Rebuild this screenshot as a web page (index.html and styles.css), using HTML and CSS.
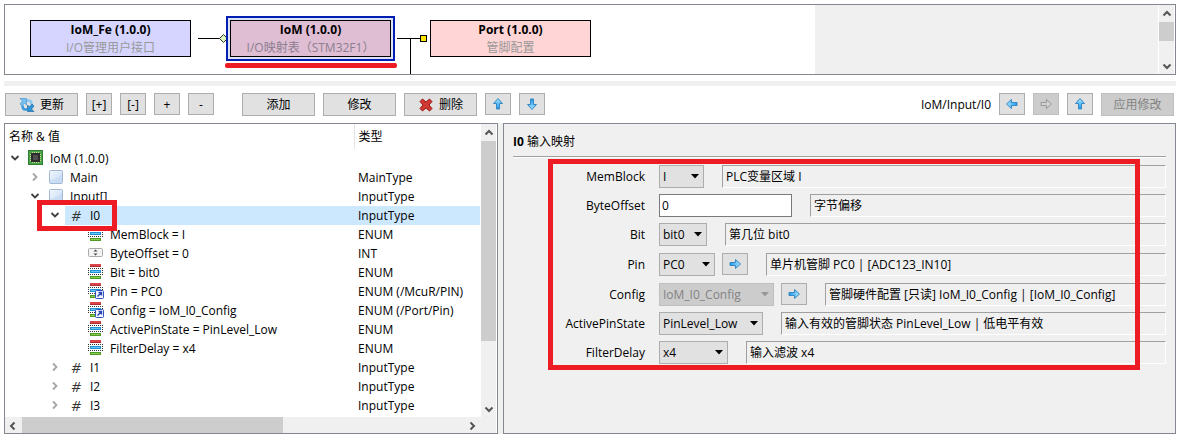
FILE: index.html
```
<!DOCTYPE html>
<html lang="zh">
<head>
    <meta charset="UTF-8">
    <meta name="viewport" content="width=device-width, initial-scale=1.0">
    <title>IoM</title>
    <link rel="stylesheet" href="styles.css">
</head>
<body>

    <!-- shared icons -->
    <svg class="sprite" aria-hidden="true">
        <defs>
            <linearGradient id="blue" x1="0" y1="0" x2="0" y2="1">
                <stop offset="0" stop-color="#a5e4ff"/>
                <stop offset="1" stop-color="#1a9bf5"/>
            </linearGradient>
            <linearGradient id="pale" x1="0" y1="0" x2="1" y2="1">
                <stop offset="0" stop-color="#f0f6fd"/>
                <stop offset="1" stop-color="#c9dcf3"/>
            </linearGradient>
        </defs>
        <symbol id="arrow" viewBox="0 0 14 14">
            <path d="M7 1.500L11.500 6.500H8.500v5.500H5.500V6.500H2.500z" fill="url(#blue)" stroke="#3a86bf" stroke-linejoin="round"/>
        </symbol>
        <symbol id="arrow-off" viewBox="0 0 14 14">
            <path d="M7 1.500L11.500 6.500H8.500v5.500H5.500V6.500H2.500z" fill="#d2d2d2" stroke="#999" stroke-linejoin="round"/>
        </symbol>
        <symbol id="open" viewBox="0 0 10 10">
            <path d="M1.500 3L5 6.500 8.500 3" fill="none" stroke="#404040" stroke-width="1.800"/>
        </symbol>
        <symbol id="closed" viewBox="0 0 10 10">
            <path d="M3 1.500L6.500 5 3 8.500" fill="none" stroke="#a6a6a6" stroke-width="1.800"/>
        </symbol>
        <symbol id="chip" viewBox="0 0 16 16">
            <rect x=".5" y=".5" width="14" height="14" fill="#4aa548" stroke="#2f7d33"/>
            <path d="M4.500 2v11M6.500 2v11M8.500 2v11M10.500 2v11M2 4.500h11M2 6.500h11M2 8.500h11M2 10.500h11" stroke="#d3d59a"/>
            <rect x="3" y="3" width="9" height="9" fill="#2c2c2c"/>
            <rect x="5" y="5" width="5" height="5" fill="#505050"/>
        </symbol>
        <symbol id="box" viewBox="0 0 16 16">
            <rect x="1.500" y="1.500" width="13" height="13" rx="1" fill="url(#pale)" stroke="#a3b8d2"/>
            <path d="M2 11Q7 11 14 5v9H2z" fill="#c3d8f2" opacity=".7"/>
        </symbol>
        <symbol id="enum" viewBox="0 0 16 16">
            <rect x="2" y="0" width="11" height="3" fill="#d9444a"/>
            <path d="M2 2.500h11" stroke="#b02c33"/>
            <path d="M0 4.500h15M0 10.500h15" stroke="#333" stroke-dasharray="1 1"/>
            <path d="M.5 6v4M14.500 6v4" stroke="#333" stroke-dasharray="1 1"/>
            <rect x="2" y="6" width="11" height="3" fill="#1e90d6"/>
            <path d="M3 7.500h9" stroke="#6cc4f2"/>
            <rect x="2" y="12" width="11" height="3" fill="#4f9a27"/>
            <path d="M3 13.500h9" stroke="#86cc50"/>
        </symbol>
        <symbol id="badge" viewBox="0 0 16 16">
            <rect x="7.500" y="7.500" width="8" height="8" rx="1" fill="#f2f5ff" stroke="#3353c0"/>
            <path d="M9.500 13.500l4-4M10.500 9.500h3v3" fill="none" stroke="#2745b5" stroke-width="1.400"/>
        </symbol>
        <symbol id="spin" viewBox="0 0 16 16">
            <rect x=".5" y="3.500" width="14" height="8" rx="1" fill="#f3f3f3" stroke="#aaa"/>
            <path d="M7.500 4.500l2 2h-4zM7.500 10.500l2-2h-4z" fill="#444"/>
        </symbol>
        <symbol id="caret" viewBox="0 0 8 5">
            <path d="M0 0h8L4 4.500z"/>
        </symbol>
        <symbol id="scroll" viewBox="0 0 10 10">
            <path d="M1.500 6.500L5 3l3.500 3.500" fill="none" stroke="#555" stroke-width="2"/>
        </symbol>
    </svg>

    <main class="app">
        <section class="diagram">
            <div class="canvas">
                <svg class="wires" width="460" height="69" aria-hidden="true">
                    <path d="M193 33.500h22M392 33.500h24M405.500 34v35" stroke="#000"/>
                    <path d="M218.500 29.500l4 4-4 4-4-4z" fill="#d9f5b8" stroke="#333"/>
                    <rect x="415.500" y="30.500" width="6" height="6" fill="#ffe600" stroke="#000"/>
                </svg>
                <div class="node node-fe"><b>IoM_Fe (1.0.0)</b><span>I/O管理用户接口</span></div>
                <div class="node node-iom"><b>IoM (1.0.0)</b><span>I/O映射表（STM32F1）</span></div>
                <div class="node node-port"><b>Port (1.0.0)</b><span>管脚配置</span></div>
                <div class="underline"></div>
            </div>
            <div class="vbar">
                <svg class="tick"><use href="#scroll"/></svg>
                <div class="thumb"></div>
                <svg class="tick down"><use href="#scroll"/></svg>
            </div>
        </section>

        <div class="sash"></div>

        <div class="toolbar">
            <button class="btn wide">
                <svg class="icon" viewBox="0 0 16 16">
                    <path d="M7 3.500h2.500q3 0 3 4" fill="none" stroke="#8cc8ee" stroke-width="2.500"/>
                    <path d="M8 12.500H6.500q-3 0-3-4" fill="none" stroke="#3b9add" stroke-width="2.500"/>
                    <path d="M1 1.500h6.500V8L5.500 6 3 9 1 7l2.500-3z" fill="#74c2f0" stroke="#4a97cc" stroke-width=".7"/>
                    <path d="M15 14.500H8.500V8l2 2L13 7l2 2-2.500 3z" fill="#2f93d8" stroke="#1c6cab" stroke-width=".7"/>
                </svg>更新</button>
            <button class="btn small">[+]</button>
            <button class="btn small">[-]</button>
            <button class="btn small">+</button>
            <button class="btn small">-</button>
            <button class="btn wide group">添加</button>
            <button class="btn wide">修改</button>
            <button class="btn wide">
                <svg class="icon" viewBox="0 0 16 16">
                    <path d="M4.500 2L8 5l3.500-3L14 4.500 11 8l3 3.500-2.500 2.500L8 11l-3.500 3L2 11.500 5 8 2 4.500z" fill="#d03a35" stroke="#9a1713"/>
                </svg>删除</button>
            <button class="btn small" aria-label="Up"><svg class="arrow"><use href="#arrow"/></svg></button>
            <button class="btn small" aria-label="Down"><svg class="arrow down"><use href="#arrow"/></svg></button>
            <span class="path">IoM/Input/I0</span>
            <button class="btn small" aria-label="Back"><svg class="arrow left"><use href="#arrow"/></svg></button>
            <button class="btn small" aria-label="Forward" disabled><svg class="arrow right"><use href="#arrow-off"/></svg></button>
            <button class="btn small" aria-label="Parent"><svg class="arrow"><use href="#arrow"/></svg></button>
            <button class="btn wide" disabled>应用修改</button>
        </div>

        <div class="panes">
            <section class="tree">
                <table>
                    <thead>
                        <tr><th>名称 &amp; 值</th><th>类型</th></tr>
                    </thead>
                    <tbody>
                        <tr><td><div class="cell"><svg class="twist"><use href="#open"/></svg><svg class="icon"><use href="#chip"/></svg>IoM (1.0.0)</div></td><td></td></tr>
                        <tr><td><div class="cell level1"><svg class="twist"><use href="#closed"/></svg><svg class="icon"><use href="#box"/></svg>Main</div></td><td>MainType</td></tr>
                        <tr><td><div class="cell level1"><svg class="twist"><use href="#open"/></svg><svg class="icon"><use href="#box"/></svg>Input[]</div></td><td>InputType</td></tr>
                        <tr class="selected"><td><div class="cell level2"><svg class="twist"><use href="#open"/></svg><i class="hash">#</i>I0</div></td><td>InputType</td></tr>
                        <tr><td><div class="cell level3"><svg class="icon"><use href="#enum"/></svg>MemBlock = I</div></td><td>ENUM</td></tr>
                        <tr><td><div class="cell level3"><svg class="icon"><use href="#spin"/></svg>ByteOffset = 0</div></td><td>INT</td></tr>
                        <tr><td><div class="cell level3"><svg class="icon"><use href="#enum"/></svg>Bit = bit0</div></td><td>ENUM</td></tr>
                        <tr><td><div class="cell level3"><svg class="icon"><use href="#enum"/><use href="#badge"/></svg>Pin = PC0</div></td><td>ENUM (/McuR/PIN)</td></tr>
                        <tr><td><div class="cell level3"><svg class="icon"><use href="#enum"/><use href="#badge"/></svg>Config = IoM_I0_Config</div></td><td>ENUM (/Port/Pin)</td></tr>
                        <tr><td><div class="cell level3"><svg class="icon"><use href="#enum"/></svg>ActivePinState = PinLevel_Low</div></td><td>ENUM</td></tr>
                        <tr><td><div class="cell level3"><svg class="icon"><use href="#enum"/></svg>FilterDelay = x4</div></td><td>ENUM</td></tr>
                        <tr><td><div class="cell level2"><svg class="twist"><use href="#closed"/></svg><i class="hash">#</i>I1</div></td><td>InputType</td></tr>
                        <tr><td><div class="cell level2"><svg class="twist"><use href="#closed"/></svg><i class="hash">#</i>I2</div></td><td>InputType</td></tr>
                        <tr><td><div class="cell level2"><svg class="twist"><use href="#closed"/></svg><i class="hash">#</i>I3</div></td><td>InputType</td></tr>
                    </tbody>
                </table>
                <div class="vbar">
                    <svg class="tick"><use href="#scroll"/></svg>
                    <div class="thumb tall"></div>
                    <svg class="tick down"><use href="#scroll"/></svg>
                </div>
                <div class="hbar">
                    <svg class="tick left"><use href="#scroll"/></svg>
                    <div class="thumb"></div>
                    <svg class="tick right"><use href="#scroll"/></svg>
                </div>
                <div class="corner"></div>
                <div class="mark mark-row"></div>
            </section>

            <section class="props">
                <h1><b>I0</b> 输入映射</h1>
                <form class="form">
                    <div class="field">
                        <label for="mem">MemBlock</label>
                        <span class="combo w45"><select id="mem"><option>I</option></select><svg><use href="#caret"/></svg></span>
                        <output class="hint">PLC变量区域 I</output>
                    </div>
                    <div class="field">
                        <label for="offset">ByteOffset</label>
                        <input id="offset" type="text" value="0">
                        <output class="hint">字节偏移</output>
                    </div>
                    <div class="field">
                        <label for="bit">Bit</label>
                        <span class="combo w48"><select id="bit"><option>bit0</option></select><svg><use href="#caret"/></svg></span>
                        <output class="hint">第几位 bit0</output>
                    </div>
                    <div class="field tall">
                        <label for="pin">Pin</label>
                        <span class="combo w56"><select id="pin"><option>PC0</option></select><svg><use href="#caret"/></svg></span>
                        <button type="button" class="btn small" aria-label="Go to pin"><svg class="arrow right"><use href="#arrow"/></svg></button>
                        <output class="hint">单片机管脚 PC0 | [ADC123_IN10]</output>
                    </div>
                    <div class="field tall">
                        <label for="config">Config</label>
                        <span class="combo w115"><select id="config" disabled><option>IoM_I0_Config</option></select><svg><use href="#caret"/></svg></span>
                        <button type="button" class="btn small" aria-label="Go to config"><svg class="arrow right"><use href="#arrow"/></svg></button>
                        <output class="hint">管脚硬件配置 [只读] IoM_I0_Config | [IoM_I0_Config]</output>
                    </div>
                    <div class="field">
                        <label for="state">ActivePinState</label>
                        <span class="combo w104"><select id="state"><option>PinLevel_Low</option></select><svg><use href="#caret"/></svg></span>
                        <output class="hint">输入有效的管脚状态 PinLevel_Low | 低电平有效</output>
                    </div>
                    <div class="field">
                        <label for="filter">FilterDelay</label>
                        <span class="combo w69"><select id="filter"><option>x4</option></select><svg><use href="#caret"/></svg></span>
                        <output class="hint">输入滤波 x4</output>
                    </div>
                    <div class="mark mark-form"></div>
                </form>
            </section>
        </div>
    </main>

</body>
</html>
```
FILE: styles.css
```
* {
    box-sizing: border-box;
}
body {
    margin: 0;
    background-color: #fff;
    color: #000;
    font-family: "Open Sans", "Noto Sans CJK SC", sans-serif;
    font-size: 12px;
    line-height: 19px;
}
button, input, select {
    font: inherit;
    color: inherit;
}
svg {
    display: block;
    flex: none;
}
.sprite {
    position: absolute;
    width: 0;
    height: 0;
}
.app {
    display: flex;
    flex-direction: column;
    min-height: 100vh;
    padding: 4px 3px 4px 4px;
}

/* diagram */
.diagram {
    display: flex;
    height: 71px;
    border: 1px solid #828790;
    background-color: #f0f0f0;
}
.canvas {
    position: relative;
    width: 810px;
    overflow: hidden;
    background-color: #fff;
}
.wires {
    position: absolute;
    left: 0;
    top: 0;
}
.node {
    position: absolute;
    top: 15px;
    width: 161px;
    height: 37px;
    border: 1px solid #000;
    text-align: center;
    line-height: 18px;
}
.node b, .node span {
    display: block;
}
.node span {
    color: #999;
}
.node-fe {
    left: 25px;
    background-color: #d5d5ff;
}
.node-iom {
    left: 225px;
    background-color: #dfbdd2;
    box-shadow: 0 0 0 2px #dbe3f7, 0 0 0 4px #001eb4;
}
.node-iom span {
    color: #8b7f91;
}
.node-port {
    left: 425px;
    background-color: #ffd5d5;
}
.underline {
    position: absolute;
    left: 220px;
    top: 58px;
    width: 172px;
    height: 5px;
    border-radius: 2px;
    background-color: #ed1c24;
}

/* scroll bars */
.vbar {
    display: flex;
    flex-direction: column;
    justify-content: space-between;
    width: 15px;
    margin-left: auto;
    background-color: #f0f0f0;
}
.diagram .vbar {
    width: 17px;
    border-left: 1px solid #fff;
    border-right: 1px solid #fff;
}
.hbar {
    display: flex;
    height: 16px;
    background-color: #f0f0f0;
}
.tick {
    width: 10px;
    height: 10px;
    margin: 4px 3px 3px;
}
.vbar .thumb {
    height: 19px;
    margin-bottom: auto;
    background-color: #cdcdcd;
}
.vbar .thumb.tall {
    flex: 0 0 200px;
}
.hbar .thumb {
    width: 261px;
    margin: 0 auto 0 1px;
    background-color: #cdcdcd;
}
.corner {
    margin-right: 1px;
    background-color: #f0f0f0;
}
.down {
    transform: rotate(180deg);
}
.left {
    transform: rotate(-90deg);
}
.right {
    transform: rotate(90deg);
}

.sash {
    height: 5px;
    margin: 6px 0 7px;
    background-color: #f0f0f0;
}

/* toolbar */
.toolbar {
    display: flex;
    align-items: flex-start;
    gap: 8px;
    height: 30px;
    padding: 0 2px 0 1px;
}
.btn {
    display: flex;
    align-items: center;
    justify-content: center;
    gap: 5px;
    height: 22px;
    padding: 0;
    border: 1px solid #adadad;
    background-color: #e1e1e1;
}
.btn:disabled {
    border-color: #bfbfbf;
    background-color: #ccc;
    color: #838383;
}
.wide {
    width: 73px;
    height: 23px;
}
.small {
    width: 26px;
}
.group {
    margin-left: 20px;
}
.path {
    margin-left: auto;
    line-height: 23px;
}
.icon {
    width: 16px;
    height: 16px;
}
.arrow {
    width: 14px;
    height: 14px;
}

/* tree */
.panes {
    display: flex;
    flex: 1;
    gap: 5px;
    background-color: #f0f0f0;
}
.tree {
    position: relative;
    display: grid;
    grid-template-columns: 1fr 17px;
    grid-template-rows: 1fr 16px;
    width: 494px;
    border: 1px solid #828790;
    background-color: #fff;
}
.tree .vbar {
    margin: 0 1px;
}
table {
    align-self: start;
    width: 100%;
    border-collapse: collapse;
    table-layout: fixed;
}
th, td {
    height: 19px;
    padding: 0 0 0 4px;
    font-weight: normal;
    text-align: left;
    white-space: nowrap;
}
th {
    height: 25px;
}
th:first-child {
    width: 349px;
    border-right: 1px solid #e5e5e5;
}
td:first-child {
    padding: 0;
}
.cell {
    display: flex;
    gap: 6px;
    height: 19px;
    padding-left: 5px;
}
.cell .icon {
    margin-top: 1px;
}
.twist {
    width: 10px;
    height: 10px;
    margin: 4px 2px 0 0;
}
.level1 {
    padding-left: 25px;
}
.level2 {
    padding-left: 45px;
}
.level3 {
    padding-left: 83px;
}
.hash {
    width: 16px;
    color: #333;
    font-size: 15px;
    text-align: center;
}
.selected {
    background: linear-gradient(to right, #fff 60px, #cce8ff 60px);
}

/* properties */
.props {
    flex: 1;
    border: 1px solid #828790;
    padding: 8px 9px;
    background-color: #f0f0f0;
}
h1 {
    margin: 0 0 8px;
    padding-bottom: 4px;
    border-bottom: 1px solid #a0a0a0;
    box-shadow: 0 1px #fff;
    font-size: 12px;
    font-weight: normal;
    line-height: 20px;
}
.form {
    position: relative;
    display: flex;
    flex-direction: column;
    gap: 6px;
}
.field {
    display: flex;
    align-items: center;
    height: 23px;
}
.field.tall {
    height: 24px;
}
label {
    width: 132px;
    margin-right: 14px;
    text-align: right;
}
input {
    width: 133px;
    height: 23px;
    padding: 0 2px;
    border: 1px solid #7a7a7a;
    background-color: #fff;
}
.combo {
    position: relative;
}
.combo select {
    display: block;
    width: 100%;
    height: 23px;
    padding: 0 3px;
    border: 1px solid #adadad;
    border-radius: 0;
    appearance: none;
    background-color: #e1e1e1;
}
.combo select:disabled {
    border-color: #bfbfbf;
    background-color: #ccc;
    color: #838383;
    opacity: 1;
}
.combo svg {
    position: absolute;
    right: 5px;
    top: 9px;
    width: 8px;
    height: 5px;
    pointer-events: none;
}
.combo select:disabled + svg {
    fill: #999;
}
.w45 { width: 45px; }
.w48 { width: 48px; }
.w56 { width: 56px; }
.w69 { width: 69px; }
.w104 { width: 104px; }
.w115 { width: 115px; }
.field .btn {
    margin-left: 7px;
}
.hint {
    flex: 1;
    height: 23px;
    margin-left: 18px;
    padding-left: 3px;
    border: 1px solid #fff;
    border-top-color: #a0a0a0;
    border-left-color: #a0a0a0;
    line-height: 21px;
    white-space: nowrap;
}

/* red markers */
.mark {
    position: absolute;
    border: 5px solid #ed1c24;
    pointer-events: none;
}
.mark-row {
    left: 32px;
    top: 76px;
    width: 80px;
    height: 31px;
}
.mark-form {
    left: 35px;
    right: 26px;
    top: -6px;
    bottom: -6px;
}
```
